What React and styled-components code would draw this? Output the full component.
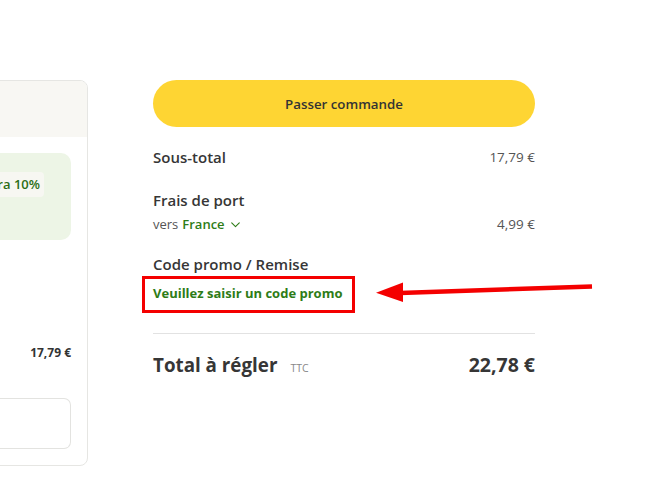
import React from 'react';
import styled, { createGlobalStyle } from 'styled-components';

const Global = createGlobalStyle`
  html, body {
    margin: 0;
    padding: 0;
    background: #fff;
  }
  body {
    font-family: "Open Sans", "Noto Sans", sans-serif;
    color: #363636;
  }
`;

const Page = styled.div`
  position: relative;
  width: 667px;
  height: 491px;
  overflow: hidden;
  display: flex;
  align-items: flex-start;
  gap: 65px;
  padding-top: 80px;
  box-sizing: border-box;
`;

const Card = styled.div`
  flex: 0 0 300px;
  margin-left: -212px;
  height: 386px;
  border: 1px solid #e6e6e3;
  border-radius: 8px;
  box-sizing: border-box;
  display: flex;
  flex-direction: column;
  overflow: hidden;
`;

const CardHead = styled.div`
  height: 56px;
  background: #f8f7f3;
`;

const CardBody = styled.div`
  display: flex;
  flex-direction: column;
  padding: 16px 16px 16px 0;
`;

const Offer = styled.div`
  height: 87px;
  border-radius: 0 10px 10px 0;
  background: #edf5e6;
  padding: 19px 27px 0 0;
  box-sizing: border-box;
  display: flex;
  justify-content: flex-end;
`;

const Pill = styled.span`
  align-self: flex-start;
  height: 25px;
  line-height: 25px;
  padding: 0 4px;
  background: #f7f7f2;
  border-radius: 4px;
  color: #2c6e16;
  font-size: 13px;
  font-weight: 600;
  white-space: nowrap;
`;

const CardTotal = styled.div`
  margin-top: 104px;
  display: flex;
  justify-content: flex-end;
  font-size: 12px;
  font-weight: 700;
  color: #333;
`;

const CardInput = styled.div`
  margin-top: 37px;
  height: 49px;
  border: 1px solid #e3e3e0;
  border-radius: 0 7px 7px 0;
  border-left: none;
`;

const Summary = styled.div`
  width: 382px;
  display: flex;
  flex-direction: column;
`;

const OrderButton = styled.button`
  height: 47px;
  border: none;
  border-radius: 24px;
  background: #fed533;
  color: #333;
  font-family: inherit;
  font-size: 13.3px;
  font-weight: 600;
  cursor: pointer;
`;

const Row = styled.div`
  display: flex;
  justify-content: space-between;
  align-items: center;
  margin-top: ${(p) => p.$gap || 0}px;
  line-height: 20px;
`;

const Label = styled.span`
  font-size: 15px;
  font-weight: 600;
  color: #363636;
`;

const Amount = styled.span`
  font-size: 13.5px;
  color: #555;
`;

const Sub = styled.span`
  font-size: 13px;
  color: #555;
  display: flex;
  align-items: center;
  gap: 4px;
`;

const Country = styled.span`
  color: #2e7c17;
  font-weight: 600;
`;

const PromoLink = styled.a`
  position: relative;
  align-self: flex-start;
  margin-top: 9px;
  line-height: 20px;
  font-size: 13px;
  font-weight: 700;
  color: #2e7c17;
  text-decoration: none;
  cursor: pointer;

  &::after {
    content: '';
    position: absolute;
    left: -11px;
    right: -13px;
    top: -7px;
    bottom: -10px;
    border: 3px solid #f40000;
  }
`;

const Divider = styled.hr`
  border: none;
  border-top: 1px solid #e2e2e2;
  margin: 30px 0 0;
  width: 100%;
`;

const TotalRow = styled.div`
  display: flex;
  justify-content: space-between;
  align-items: baseline;
  margin-top: 17px;
  line-height: 28px;
`;

const TotalLabel = styled.span`
  font-size: 18.8px;
  font-weight: 700;
  color: #363636;
`;

const Ttc = styled.span`
  font-size: 10.5px;
  color: #888;
  margin-left: 13px;
`;

const TotalValue = styled.span`
  font-size: 19.5px;
  font-weight: 700;
  color: #363636;
`;

const Arrow = styled.svg`
  position: absolute;
  left: 370px;
  top: 276px;
`;

export default function App() {
  return (
    <>
      <Global />
      <Page>
        <Card>
          <CardHead />
          <CardBody>
            <Offer>
              <Pill>Code fidélité : remise extra 10%</Pill>
            </Offer>
            <CardTotal>17,79 €</CardTotal>
            <CardInput />
          </CardBody>
        </Card>

        <Summary>
          <OrderButton type="button">Passer commande</OrderButton>
          <Row $gap={20}>
            <Label>Sous-total</Label>
            <Amount>17,79 €</Amount>
          </Row>
          <Row $gap={23}>
            <Label>Frais de port</Label>
          </Row>
          <Row $gap={4}>
            <Sub>
              vers <Country>France</Country>
              <svg width="13" height="13" viewBox="0 0 24 24" fill="none" stroke="#2e7c17" strokeWidth="2" strokeLinecap="round" strokeLinejoin="round">
                <path d="M5 9l7 7 7-7" />
              </svg>
            </Sub>
            <Amount>4,99 €</Amount>
          </Row>
          <Row $gap={20}>
            <Label>Code promo / Remise</Label>
          </Row>
          <PromoLink>Veuillez saisir un code promo</PromoLink>
          <Divider />
          <TotalRow>
            <span>
              <TotalLabel>Total à régler</TotalLabel>
              <Ttc>TTC</Ttc>
            </span>
            <TotalValue>22,78 €</TotalValue>
          </TotalRow>
        </Summary>

        <Arrow width="230" height="32" viewBox="0 0 230 32">
          <line x1="30" y1="17" x2="222" y2="10.5" stroke="#f40000" strokeWidth="4.5" />
          <polygon points="6,16.7 33,6.5 33,26" fill="#f40000" />
        </Arrow>
      </Page>
    </>
  );
}
